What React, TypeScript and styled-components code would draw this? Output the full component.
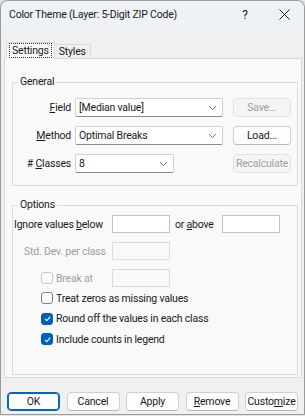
import React from 'react'
import styled, { createGlobalStyle } from 'styled-components'

const GlobalStyle = createGlobalStyle`
  html, body {
    margin: 0;
    padding: 0;
    background: #e9e6e1;
  }
  body {
    font-family: Roboto, "Noto Sans", "Liberation Sans", sans-serif;
    font-size: 10.5px;
    letter-spacing: -0.2px;
    color: #1a1a1a;
  }
`

const Chevron: React.FC = () => (
  <svg width="9" height="6" viewBox="0 0 9 6">
    <path d="M1 1 L4.5 4.5 L8 1" fill="none" stroke="#7a7a7a" strokeWidth="1" />
  </svg>
)

const Check: React.FC = () => (
  <svg width="9" height="9" viewBox="0 0 9 9">
    <path d="M2 4.8 L3.8 6.6 L7.2 2.6" fill="none" stroke="#fff" strokeWidth="1.1" />
  </svg>
)

const CloseIcon: React.FC = () => (
  <svg width="11" height="11" viewBox="0 0 11 11">
    <path d="M0.5 0.5 L10.5 10.5 M10.5 0.5 L0.5 10.5" stroke="#1a1a1a" strokeWidth="1" />
  </svg>
)

export default function App() {
  return (
    <>
      <GlobalStyle />
      <Window>
        <TitleBar>
          <Title>Color Theme (Layer: 5-Digit ZIP Code)</Title>
          <HelpButton>?</HelpButton>
          <CloseButton><CloseIcon /></CloseButton>
        </TitleBar>
        <Body>
          <Tabs>
            <Tab $active><Focus>Settings</Focus></Tab>
            <Tab>Styles</Tab>
          </Tabs>
          <Panel>
            <Group>
              <Legend>General</Legend>
              <GeneralGrid>
                <RowLabel><u>F</u>ield</RowLabel>
                <Combo $width={148}>
                  <span>[Median value]</span>
                  <Chevron />
                </Combo>
                <Button $disabled>Save...</Button>

                <RowLabel><u>M</u>ethod</RowLabel>
                <Combo $width={148}>
                  <span>Optimal Breaks</span>
                  <Chevron />
                </Combo>
                <Button>Load...</Button>

                <RowLabel># <u>C</u>lasses</RowLabel>
                <Combo $width={99}>
                  <span>8</span>
                  <Chevron />
                </Combo>
                <Button $disabled>Recalculate</Button>
              </GeneralGrid>
            </Group>

            <Group $options>
              <Legend>Options</Legend>
              <OptionRows>
                <FieldRow>
                  <FieldLabel>Ignore values <u>b</u>elow</FieldLabel>
                  <TextBox />
                  <AboveLabel>or <u>a</u>bove</AboveLabel>
                  <TextBox />
                </FieldRow>
                <FieldRow>
                  <FieldLabel $indent={10} $disabled>Std. Dev. per class</FieldLabel>
                  <TextBox $disabled />
                </FieldRow>
                <FieldRow>
                  <CheckLine $width={98}>
                    <Box $disabled />
                    <CheckText $disabled>Break at</CheckText>
                  </CheckLine>
                  <TextBox $disabled />
                </FieldRow>
                <CheckList>
                  <CheckLine>
                    <Box />
                    <CheckText>Treat zeros as missing values</CheckText>
                  </CheckLine>
                  <CheckLine>
                    <Box $checked><Check /></Box>
                    <CheckText>Round off the values in each class</CheckText>
                  </CheckLine>
                  <CheckLine>
                    <Box $checked><Check /></Box>
                    <CheckText>Include counts in legend</CheckText>
                  </CheckLine>
                </CheckList>
              </OptionRows>
            </Group>
          </Panel>
          <Footer>
            <Button $default>OK</Button>
            <Button>Cancel</Button>
            <Button>Apply</Button>
            <Button><u>R</u>emove</Button>
            <Button>Custo<u>m</u>ize</Button>
          </Footer>
        </Body>
      </Window>
    </>
  )
}

const Window = styled.div`
  width: 303px;
  height: 413px;
  border: 1px solid #9a9a9a;
  border-radius: 8px 8px 0 0;
  background: #f0f0f0;
  overflow: hidden;
  display: flex;
  flex-direction: column;
  box-shadow: 0 1px 3px rgba(0, 0, 0, 0.3);
`

const TitleBar = styled.div`
  height: 27px;
  background: #eef2f7;
  display: flex;
  align-items: center;
  padding-left: 8px;
`

const Title = styled.div`
  flex: 1;
  min-width: 0;
  white-space: nowrap;
  color: #1a1a1a;
`

const HelpButton = styled.div`
  width: 20px;
  text-align: center;
  font-size: 12px;
  margin-right: 9px;
`

const CloseButton = styled.div`
  width: 40px;
  display: flex;
  justify-content: center;
  align-items: center;
`

const Body = styled.div`
  flex: 1;
  display: flex;
  flex-direction: column;
  padding: 14px 2px 0 3px;
`

const Tabs = styled.div`
  display: flex;
  align-items: flex-end;
  padding-left: 2px;
  height: 17px;
  position: relative;
  z-index: 1;
  margin-bottom: -1px;
`

const Tab = styled.div<{ $active?: boolean }>`
  height: ${p => (p.$active ? '17px' : '15px')};
  padding: 0 ${p => (p.$active ? '2px' : '4px')};
  display: flex;
  align-items: center;
  border: 1px solid #d9d9d9;
  border-bottom: ${p => (p.$active ? '1px solid #f9f9f9' : '1px solid #d9d9d9')};
  border-left: ${p => (p.$active ? '1px solid #d9d9d9' : 'none')};
  background: ${p => (p.$active ? '#f9f9f9' : '#f0f0f0')};
  box-sizing: border-box;
`

const Focus = styled.span`
  border: 1px dotted #333;
  padding: 0 2px;
  line-height: 13px;
`

const Panel = styled.div`
  height: 320px;
  box-sizing: border-box;
  border: 1px solid #d9d9d9;
  background: #f9f9f9;
  padding: 15px 3px 0 7px;
  display: flex;
  flex-direction: column;
  gap: 11px;
`

const Group = styled.fieldset<{ $options?: boolean }>`
  margin: 0;
  border: 1px solid #dcdcdc;
  padding: ${p => (p.$options ? '2px 2px 0 1px' : '8px 2px 12px 1px')};
  height: ${p => (p.$options ? '178px' : 'auto')};
  box-sizing: border-box;
`

const Legend = styled.legend`
  padding: 0 2px;
  margin-left: 4px;
  line-height: 16px;
`

const GeneralGrid = styled.div`
  display: grid;
  grid-template-columns: 57px 148px 58px;
  column-gap: 4px;
  row-gap: 9px;
  align-items: center;

  & > :nth-child(3n) {
    margin-left: 6px;
  }
`

const RowLabel = styled.div`
  text-align: right;
`

const Combo = styled.div<{ $width: number }>`
  width: ${p => p.$width}px;
  height: 19px;
  box-sizing: border-box;
  background: #fff;
  border: 1px solid #d0d0d0;
  border-bottom-color: #8a8a8a;
  border-radius: 2px;
  display: flex;
  align-items: center;
  justify-content: space-between;
  padding: 0 5px 0 3px;
`

const Button = styled.div<{ $disabled?: boolean; $default?: boolean }>`
  width: 53px;
  height: 19px;
  box-sizing: border-box;
  display: flex;
  align-items: center;
  justify-content: center;
  border-radius: 4px;
  background: ${p => (p.$disabled ? '#f5f5f5' : '#fdfdfd')};
  border: 1px solid ${p => (p.$default ? '#0067c0' : p.$disabled ? '#e2e2e2' : '#d0d0d0')};
  border-bottom-color: ${p => (p.$default ? '#0067c0' : p.$disabled ? '#e2e2e2' : '#b8b8b8')};
  box-shadow: ${p => (p.$default ? 'inset 0 0 0 1px #0067c0' : 'none')};
  color: ${p => (p.$disabled ? '#a0a0a0' : '#1a1a1a')};
  white-space: nowrap;

  ${GeneralGrid} & {
    width: 58px;
  }
`

const OptionRows = styled.div`
  display: flex;
  flex-direction: column;
  gap: 9px;
`

const FieldRow = styled.div`
  display: flex;
  align-items: center;
  height: 18px;
`

const FieldLabel = styled.div<{ $indent?: number; $disabled?: boolean }>`
  width: 98px;
  box-sizing: border-box;
  padding-left: ${p => p.$indent ?? 0}px;
  color: ${p => (p.$disabled ? '#a0a0a0' : '#1a1a1a')};
  white-space: nowrap;
`

const AboveLabel = styled.div`
  margin: 0 8px 0 5px;
  white-space: nowrap;
`

const TextBox = styled.div<{ $disabled?: boolean }>`
  width: 58px;
  height: 18px;
  box-sizing: border-box;
  background: ${p => (p.$disabled ? '#f9f9f9' : '#fff')};
  border: 1px solid ${p => (p.$disabled ? '#dcdcdc' : '#c4c4c4')};
`

const CheckList = styled.div`
  display: flex;
  flex-direction: column;
  gap: 0.5px;
  margin-top: -8px;
`

const CheckLine = styled.div<{ $width?: number }>`
  display: flex;
  align-items: center;
  gap: 3px;
  padding-left: 27px;
  height: 20px;
  width: ${p => (p.$width ? `${p.$width}px` : 'auto')};
  box-sizing: border-box;
`

const Box = styled.div<{ $checked?: boolean; $disabled?: boolean }>`
  width: 12px;
  height: 12px;
  box-sizing: border-box;
  border-radius: 3px;
  display: flex;
  align-items: center;
  justify-content: center;
  background: ${p => (p.$checked ? '#005fb8' : '#fdfdfd')};
  border: 1px solid ${p => (p.$checked ? '#005fb8' : p.$disabled ? '#c8c8c8' : '#808080')};
`

const CheckText = styled.span<{ $disabled?: boolean }>`
  color: ${p => (p.$disabled ? '#a0a0a0' : '#1a1a1a')};
  white-space: nowrap;
`

const Footer = styled.div`
  display: flex;
  gap: 6.5px;
  padding: 14px 0 0 3px;
`
